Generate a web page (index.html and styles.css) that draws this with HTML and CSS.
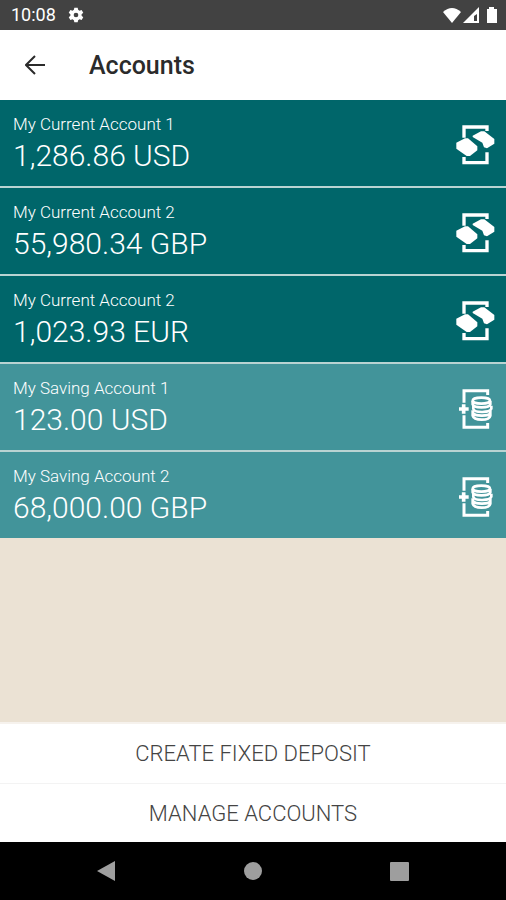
FILE: index.html
```html
<!DOCTYPE html>
<html lang="en">
<head>
  <meta charset="UTF-8">
  <meta name="viewport" content="width=device-width, initial-scale=1.0">
  <title>Accounts</title>
  <link rel="stylesheet" href="styles.css">
</head>
<body>
  <!-- Shared icons -->
  <svg class="sprite" aria-hidden="true">
    <symbol id="icon-current" viewBox="50 44 117 120">
      <path d="M74 82V50H143V62M74 140V157H143V126" fill="none" stroke="currentColor" stroke-width="10"/>
      <path d="M51 97L77 84H86L114 108V120L92 137H82L51 115Z" fill="currentColor"/>
      <path d="M100 76L125 63H135L165 86V100L143 114L134 111L129 97L100 80Z" fill="currentColor"/>
    </symbol>
    <symbol id="icon-saving" viewBox="50 38 117 120">
      <path d="M74 79V43H145V56M74 117V153H145V140" fill="none" stroke="currentColor" stroke-width="9"/>
      <path d="M73 84V112M59 98H88" stroke="currentColor" stroke-width="11"/>
      <g fill="none" stroke="currentColor" stroke-width="8">
        <ellipse cx="126" cy="73" rx="26" ry="9"/>
        <path d="M100 74V84C103 96 150 96 153 84V74"/>
        <path d="M102 88V98C105 110 153 110 156 97V88"/>
        <path d="M100 102V118C104 134 150 134 153 118V104M101 110C107 121 150 120 153 110"/>
      </g>
    </symbol>
  </svg>

  <div class="status-bar">
    <span class="time">10:08</span>
    <svg class="gear" viewBox="0 0 24 24">
      <path fill="currentColor" fill-rule="evenodd" d="M9.500 1h5l.7 3.300 2 1.200 3.200-1.100 2.500 4.300-2.500 2.200v2.200l2.500 2.200-2.500 4.300-3.200-1.100-2 1.200-.7 3.300h-5l-.7-3.300-2-1.200-3.200 1.100-2.500-4.300 2.500-2.200v-2.200L1.100 8.700l2.500-4.300 3.200 1.100 2-1.200zM12 8.500a3.500 3.500 0 1 0 0 7 3.500 3.500 0 0 0 0-7z"/>
    </svg>
    <svg class="signals" viewBox="0 0 56 18">
      <path fill="currentColor" d="M0 6Q9-2 18 6L9 17Z"/>
      <path fill="currentColor" d="M36 1V17H20ZM34 8L31 10V15H34Z" fill-rule="evenodd"/>
      <path fill="currentColor" d="M46 1H51V3H54V17H44V3H46Z"/>
    </svg>
  </div>

  <header class="app-bar">
    <button class="back" type="button" aria-label="Back">
      <svg viewBox="0 0 20 20" fill="none" stroke="currentColor" stroke-width="2">
        <path d="M20 10H2M10 1L1 10L10 19"/>
      </svg>
    </button>
    <h1>Accounts</h1>
  </header>

  <main>
    <ul class="accounts">
      <li class="account">
        <div>
          <p class="name">My Current Account 1</p>
          <p class="amount">1,286.86 USD</p>
        </div>
        <svg class="icon"><use href="#icon-current"/></svg>
      </li>
      <li class="account">
        <div>
          <p class="name">My Current Account 2</p>
          <p class="amount">55,980.34 GBP</p>
        </div>
        <svg class="icon"><use href="#icon-current"/></svg>
      </li>
      <li class="account">
        <div>
          <p class="name">My Current Account 2</p>
          <p class="amount">1,023.93 EUR</p>
        </div>
        <svg class="icon"><use href="#icon-current"/></svg>
      </li>
      <li class="account saving">
        <div>
          <p class="name">My Saving Account 1</p>
          <p class="amount">123.00 USD</p>
        </div>
        <svg class="icon"><use href="#icon-saving"/></svg>
      </li>
      <li class="account saving">
        <div>
          <p class="name">My Saving Account 2</p>
          <p class="amount">68,000.00 GBP</p>
        </div>
        <svg class="icon"><use href="#icon-saving"/></svg>
      </li>
    </ul>
  </main>

  <div class="actions">
    <button type="button">CREATE FIXED DEPOSIT</button>
    <button type="button">MANAGE ACCOUNTS</button>
  </div>

  <nav class="nav-bar">
    <button type="button" aria-label="Back">
      <svg viewBox="0 0 20 20"><path fill="currentColor" d="M18 0V20L0 10Z"/></svg>
    </button>
    <button type="button" aria-label="Home">
      <svg viewBox="0 0 20 20"><circle fill="currentColor" cx="10" cy="10" r="9"/></svg>
    </button>
    <button type="button" aria-label="Recent apps">
      <svg viewBox="0 0 20 20"><rect fill="currentColor" width="19" height="19" x="1" y="1" rx="1"/></svg>
    </button>
  </nav>
</body>
</html>
```
FILE: styles.css
```css
* {
  box-sizing: border-box;
}

body {
  display: flex;
  flex-direction: column;
  min-height: 100vh;
  margin: 0;
  font-family: Roboto, sans-serif;
  background-color: #ebe2d4;
}

h1,
p,
ul {
  margin: 0;
  padding: 0;
}

button {
  padding: 0;
  border: none;
  background: none;
  font-family: inherit;
  cursor: pointer;
}

svg {
  display: block;
}

.sprite {
  position: absolute;
  width: 0;
  height: 0;
}

.status-bar {
  display: flex;
  align-items: center;
  gap: 12px;
  height: 30px;
  padding: 0 7px 0 11px;
  color: #fff;
  background-color: #424242;
}

.time {
  font-size: 18px;
  line-height: 32px;
}

.gear {
  width: 16px;
  height: 16px;
}

.signals {
  width: 56px;
  height: 18px;
  margin-left: auto;
}

.app-bar {
  display: flex;
  align-items: center;
  gap: 44px;
  height: 70px;
  padding: 0 25px;
  color: #2b2b2b;
  background-color: #fff;
}

.back {
  color: inherit;
}

.back svg {
  width: 20px;
  height: 20px;
}

h1 {
  padding-top: 2px;
  font-size: 25px;
  font-weight: 500;
  line-height: 32px;
}

main {
  flex: 1;
}

.accounts {
  display: grid;
  gap: 2px;
  list-style: none;
  background-color: #b9d3d2;
}

.account {
  display: flex;
  align-items: center;
  justify-content: space-between;
  padding: 13px 11px 9px 13px;
  color: #fff;
  background-color: #00666a;
}

.saving {
  background-color: #42949a;
}

.name {
  font-size: 17px;
  font-weight: 300;
  line-height: 22px;
}

.amount {
  font-size: 30px;
  font-weight: 300;
  line-height: 42px;
}

.icon {
  width: 39px;
  height: 40px;
}

.actions {
  display: flex;
  flex-direction: column;
  border-top: 2px solid #f6f2ed;
  background-color: #fff;
}

.actions button {
  height: 59px;
  color: #444;
  font-size: 22px;
  font-weight: 300;
}

.actions button + button {
  border-top: 1px solid #f3f3f3;
}

.nav-bar {
  display: flex;
  justify-content: center;
  gap: 126px;
  height: 58px;
  color: #9e9e9e;
  background-color: #000;
}

.nav-bar button {
  color: inherit;
}

.nav-bar svg {
  width: 20px;
  height: 20px;
}
```
